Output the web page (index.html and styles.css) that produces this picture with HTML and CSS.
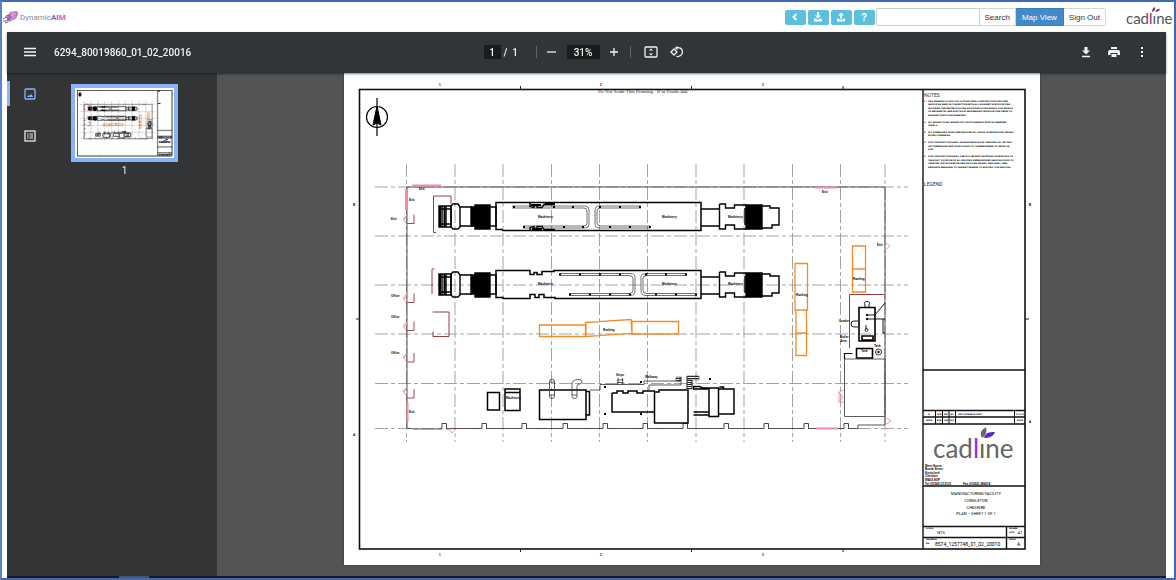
FILE: index.html
```html
<!DOCTYPE html>
<html lang="en">
<head>
<meta charset="utf-8">
<meta name="viewport" content="width=device-width, initial-scale=1">
<title>DynamicAIM</title>
<link rel="stylesheet" href="styles.css">
</head>
<body>
<div class="app">
  <header class="topbar">
    <a class="brand" href="#">
      <svg class="brand-mark" viewBox="0 0 16 14" aria-hidden="true">
        <path d="M4 7L7 2l7-1 1.500 3-3 5-7 3z" fill="#b97cc6"/>
        <path d="M0 9l3-2 3 1M0 11h4l1-2M2 13l3-1M3 6l3-1 2 3-3 2z" fill="none" stroke="#8a5a9c" stroke-width="1"/>
        <path d="M8 4l4-1M8 6l5-2M8 9l4-3" stroke="#e8b0dc" stroke-width="1"/>
      </svg>
      <span>Dynamic<b>AI<span class="brand-end">M</span></b></span>
    </a>
    <div class="actions">
      <button class="tool" type="button" aria-label="Back"><svg viewBox="0 0 10 10"><path d="M6.500 2L3.500 5l3 3" fill="none" stroke="#fff" stroke-width="1.800"/></svg></button>
      <button class="tool" type="button" aria-label="Download"><svg viewBox="0 0 10 10"><path d="M4 0h2v3.500h2L5 6.500 2 3.500h2zM1 6.500h2l2 1.500 2-1.500h2V9.500H1z" fill="#fff"/></svg></button>
      <button class="tool" type="button" aria-label="Upload"><svg viewBox="0 0 10 10"><path d="M4 6.500h2V3.500h2L5 .5 2 3.500h2zM1 6.500h2v1h4v-1h2v3H1z" fill="#fff"/></svg></button>
      <button class="tool" type="button" aria-label="Help">?</button>
    </div>
    <form class="search">
      <input class="search-box" type="text" aria-label="Search">
      <button class="btn" type="button">Search</button>
      <button class="btn primary" type="button">Map View</button>
      <button class="btn last" type="button">Sign Out</button>
    </form>
    <svg class="company" viewBox="0 0 48 20" role="img" aria-label="cadline">
      <text class="logo-small" x="1" y="17">cad<tspan fill="#a0207c">l</tspan>ıne</text>
      <path d="M27 5q0-4 3-5 1 4-3 5M30 5q2-4 5-3-1 3-5 3" fill="#7b3a72"/>
    </svg>
  </header>

  <section class="viewer">
    <div class="toolbar">
      <div class="tb-left">
        <button class="icon" type="button" aria-label="Menu"><svg viewBox="0 0 12 10"><path d="M0 1.500h12M0 5h12M0 8.500h12" stroke="#f1f1f1" stroke-width="1.400"/></svg></button>
        <h1 class="doc">6294_80019860_01_02_20016</h1>
      </div>
      <div class="tb-mid">
        <input class="field page" type="text" value="1" aria-label="Page">
        <span class="count">/&nbsp; 1</span>
        <i class="sep"></i>
        <button class="icon step" type="button" aria-label="Zoom out"><svg viewBox="0 0 12 12"><path d="M1 6h9" stroke="#f1f1f1" stroke-width="1.300"/></svg></button>
        <input class="field zoom" type="text" value="31%" aria-label="Zoom level">
        <button class="icon step" type="button" aria-label="Zoom in"><svg viewBox="0 0 12 12"><path d="M1 6h8M5 2v8" stroke="#f1f1f1" stroke-width="1.300"/></svg></button>
        <i class="sep end"></i>
        <button class="icon wide" type="button" aria-label="Fit to page"><svg viewBox="0 0 14 12"><rect x="1" y="1" width="12" height="10" rx="1" fill="none" stroke="#f1f1f1" stroke-width="1.300"/><path d="M7 2.500l2 2H5zM7 9.500l2-2H5z" fill="#f1f1f1"/></svg></button>
        <button class="icon wide" type="button" aria-label="Rotate"><svg viewBox="0 0 14 12"><path d="M1 6l3-3 3 3-3 3z" fill="none" stroke="#f1f1f1" stroke-width="1.300"/><path d="M6 1.800c4-1 6.500 1.200 6.500 4.200S9.500 11 6.500 10.500" fill="none" stroke="#f1f1f1" stroke-width="1.300"/><path d="M7.500 0v4L4.500 2z" fill="#f1f1f1"/></svg></button>
      </div>
      <div class="tb-right">
        <button class="icon right" type="button" aria-label="Download file"><svg viewBox="0 0 12 12"><path d="M4.500 1h3v3.500H10l-4 4-4-4h2.500zM2 9.800h8v1.400H2z" fill="#f1f1f1"/></svg></button>
        <button class="icon right" type="button" aria-label="Print"><svg viewBox="0 0 12 12"><path d="M3 1h6v2H3zM2 4h8q2 0 2 2v3H9.500V7h-7v2H0V6q0-2 2-2M3.500 8h5v3h-5z" fill="#f1f1f1"/></svg></button>
        <button class="icon right" type="button" aria-label="More"><svg viewBox="0 0 12 12"><path d="M5 1h2v2H5zM5 5h2v2H5zM5 9h2v2H5z" fill="#f1f1f1"/></svg></button>
      </div>
    </div>

    <div class="work">
      <aside class="side">
        <nav class="tabs">
          <button class="tab active" type="button" aria-label="Thumbnails"><svg viewBox="0 0 12 12"><rect x="1" y="1" width="10" height="10" rx="1" fill="none" stroke="#8ab4f8" stroke-width="1.300"/><path d="M3 9l1.500-2 1 .8L7.500 6 9 9z" fill="#8ab4f8"/></svg></button>
          <button class="tab" type="button" aria-label="Outline"><svg viewBox="0 0 12 12"><rect x="1" y="1" width="10" height="10" fill="none" stroke="#e8e8e8" stroke-width="1.300"/><path d="M3 4h1.500M5.500 4H9M3 6h1.500M5.500 6H9M3 8h1.500M5.500 8H9" stroke="#e8e8e8" stroke-width="1.100"/></svg></button>
        </nav>
        <figure class="thumb">
          <svg class="thumb-sheet" viewBox="344 73 696 492" aria-hidden="true">
            <use href="#plan"/>
            <g class="dense"><use href="#plan" x="3"/></g>
            <g class="dense"><use href="#plan" y="3"/></g>
            <g class="dense"><use href="#plan" x="3" y="3"/></g>
          </svg>
          <figcaption>1</figcaption>
        </figure>
      </aside>

      <main class="canvas">
        <svg class="sheet" viewBox="344 73 696 492" role="img" aria-label="Manufacturing facility plan">
          <defs>
            <pattern id="hatch" width="2" height="2" patternUnits="userSpaceOnUse"><path d="M0 .5h2" stroke="#222" stroke-width="1"/></pattern>
            <g id="ends" fill="none" stroke="#000" stroke-width="1.400">
              <path d="M439 206h12v21h-12zM442 206v21M446 206v21M439 209h12M439 224h12"/>
              <path d="M440 206v21M444.500 206v21" stroke-width="2"/>
              <path d="M451 206l2-2h5l2 3v20l-2 2h-5l-2-2zM460 207h12v19h-12z"/>
              <path d="M471 207h4v-2h15v24h-15v-3h-4z" fill="#000"/>
              <path d="M490 207h6v19h-6M701 209h18.500v17H701M719.500 204h6v4h9v-3h12M719.500 204v25h6v-4h9v4h12M745 208v17"/>
              <path d="M746 205h16v24h-16z" fill="#000"/>
              <path d="M762 206h8v2h9v17h-7v3h-10"/>
            </g>
            <path id="door" d="M0 -4l-4 4 3 4M-3 1l3-4" fill="none" stroke="#ef7f9c" stroke-width=".8"/>
            <path id="frame" d="M0 8h7.500v-9" fill="none" stroke="#a34852" stroke-width="1"/>
            <g id="bump"><path d="M0 427h4.500v3H0z" fill="#fff"/><path d="M-1 428.500h1v-5h4.500v5h1" fill="none" stroke="#333" stroke-width=".9"/></g>
          </defs>
          <g id="plan">
            <rect x="344" y="73" width="696" height="492" fill="#fff"/>
            <rect x="359.500" y="89.500" width="665.500" height="459.500" fill="none" stroke="#111" stroke-width="1.600"/>
            <path d="M520.500 86v4M691.500 86v4M843 86v4M520.500 549v3M691.500 549v3M843 549v3M356 319h4M1025 319h4" stroke="#222"/>
            <g class="mark">
              <text x="439" y="86">1</text><text x="600" y="86">2</text><text x="762" y="86">3</text>
              <text x="439" y="556">1</text><text x="600" y="556">2</text><text x="762" y="556">3</text>
              <text x="353" y="206">B</text><text x="353" y="436">A</text><text x="1029" y="206">B</text><text x="1029" y="423">A</text>
            </g>
            <text class="scale-note" x="598" y="93">Do Not Scale This Drawing - If in Doubt Ask</text>

            <g fill="none" stroke="#000">
              <circle cx="377" cy="117" r="10.500" stroke-width="1.200"/>
              <path d="M377 98v38" stroke-width="1.200"/>
              <path d="M377 106l4 19-4-2-4 2z" fill="#000"/>
            </g>

            <path d="M406.500 164v278M455 164v278M503 164v278M551.500 164v278M599.500 164v278M647.500 164v278M696 164v278M744 164v278M792.500 164v278M840.500 164v278M885 164v278M375 187h533M375 236h533M375 285h533M375 334h533M375 383.500h533M375 428.500h533" fill="none" stroke="#999" stroke-width=".9" stroke-dasharray="13 3 4 3"/>

            <path d="M406.500 187H885V425h-27v3.500H452l-3 .5h-35l-7-1V187" fill="none" stroke="#444" stroke-width=".9"/>
            <use href="#bump" x="442"/><use href="#bump" x="482"/><use href="#bump" x="522"/><use href="#bump" x="563"/><use href="#bump" x="603"/><use href="#bump" x="643"/><use href="#bump" x="683"/><use href="#bump" x="724"/><use href="#bump" x="764"/><use href="#bump" x="804"/><use href="#bump" x="844"/>

            <path d="M412 185.500h29M406 189v21M407.500 402v20M815 187.500h23M816 428.500h22" stroke="#f58aa8" stroke-width="2"/>
            <use href="#door" x="407" y="219"/><use href="#door" x="407" y="298"/><use href="#door" x="407" y="326"/><use href="#door" x="407" y="357"/><use href="#door" x="407" y="391"/>
            <use href="#frame" x="406.500" y="215.500"/><use href="#frame" x="406.500" y="294.500"/><use href="#frame" x="406.500" y="322.500"/><use href="#frame" x="406.500" y="354"/><use href="#frame" x="406.500" y="390"/>
            <path d="M885 242l5 4-5 4M885 417l6 4-6 4M844 390l-5 2 4 5-4 5h5M839 392v10M449 429l3 4 4-4" fill="none" stroke="#ef7f9c" stroke-width=".8"/>
            <path d="M436 232.500h-2.500V196H451v8M434.500 269h-2.500v25M432.500 312h16.500v24.500h-16v-5M849.500 348v-53.500H885" fill="none" stroke="#9a3b46" stroke-width="1"/>

            <use href="#ends"/>
            <use href="#ends" y="68"/>
            <g fill="none" stroke="#000" stroke-width="1.500">
              <path d="M496 202.500h205v28H503l-1-1h-6zM530 202.500v4l4 1v-2h3v2h5l2-3h11M530 230.500v-3l4-1v2h3v-2h5l2 3h11"/>
              <path d="M496 270.500h34v4h4v-2h3v2h5v-3h12v-1h147v28H555v-1h-11v-3h-5v3h-4v-3h-5v4h-27v-1h-7z"/>
            </g>
            <g fill="none" stroke="#333" stroke-width=".7">
              <path d="M512 206h73q4 0 4 4v14q0 4-4 4h-62M512 208h72q3 0 3 3v12q0 3-3 3h-61M641 206h-41q-5 0-5 4v14q0 4 5 4h50M641 208h-40q-4 0-4 3v12q0 3 4 3h49"/>
              <path d="M559 273.500h71q5 0 5 4v13q0 5-5 5h-61M559 275.500h70q4 0 4 3v12q0 3-4 3h-60M687 273.500h-41q-5 0-5 4v13q0 5 5 5h51M687 275.500h-40q-4 0-4 3v12q0 3 4 3h50"/>
            </g>
            <path d="M513 207h2M553 207h2M572 207h2M599 207h2M619 207h2M639 207h2M523 227h2M563 227h2M582 227h2M609 227h2M629 227h2M649 227h2M559 274.500h2M579 274.500h2M599 274.500h2M619 274.500h2M645 274.500h2M665 274.500h2M685 274.500h2M569 294.500h2M589 294.500h2M609 294.500h2M629 294.500h2M655 294.500h2M675 294.500h2M695 294.500h2M531 205h10M532 229h10M545 204h10M545 230h10M604 387h2M604 414h2M640 414h2M640 382h2M709 379h2" stroke="#000" stroke-width="2"/>

            <g fill="none" stroke="#f28c28" stroke-width="1.300">
              <path d="M539.500 325H586v11.500h-46.500zM585.500 322.500L631 319.500l1 14-46.500 3zM632 321.500h46.500V334H632z"/>
              <path d="M795 263.500h12.500V310H795zM796 310h10.500v45.500H796zM796 333h10.500M852.500 246h13v46h-13zM852.500 269h13"/>
            </g>

            <g fill="none" stroke="#000" stroke-width="1.500">
              <path d="M487.500 392.500h12V410h-12zM505 389h15v21.500h-15zM505 392.500h15M539.500 390H586v29.500h-46.500zM586 391.500h3.500V415H586"/>
              <path d="M612 393h5v-2h6v2h5v-2h9v2h6v-2h12M612 393v19h42M654.500 392v31H688v-33h-29v2z"/>
              <path d="M693.500 386v3H709M693.500 386.500h6l3 1.500h6.500M693.500 415h15.500M693.500 412h15.500M709 388h9.500v28.500H709zM718.500 389H734v25h-15.500M719.500 387h4v2"/>
            </g>
            <g fill="none" stroke="#333" stroke-width=".8">
              <path d="M549.500 396v-14q0-3 2.500-3t2.500 3v14q0 2.500-2.500 2.500t-2.500-2.500M549.500 382h5M549.500 395h5M572 396v-12q0-4 6-4.500 4 0 4 2l-1 2q-4 0-4 3v10q0 2-2.500 2t-2.500-2M572 395h5"/>
              <path d="M590 390h10v-5.500h44V381h36v-4M649 390v-5h32v-8M618 378v7M622.500 378v7M617 380h6.500M617 382.500h6.500M687 376v14M692 380v8M844.500 359H885v57.500h-40.500z"/>
            </g>
            <path d="M676 377h5v4h-5zM687 376h12v4h-12zM687 380h5v9h-5z" fill="url(#hatch)" stroke="#444" stroke-width=".6"/>
            <path d="M844.500 359v-5.500h8" fill="none" stroke="#111" stroke-width="1.200"/>
            <g fill="none" stroke="#000">
              <path d="M859 307.500h16V341h-16zM856.500 348.500h16v9.500h-16zM862 336h11v4h-11z" stroke-width="1.600"/>
              <path d="M865 307v-2q-2-3 2-3.500 4 0 2 3.500v2M868 315h7l10-12M867 319h18M883 319v14h2M866 325v5M854 321a3 3 0 1 0 0 6M858 321h-4M858 327h-4" stroke-width=".9"/>
              <circle cx="866.500" cy="330" r="1.500" stroke-width=".7"/><circle cx="867" cy="315" r=".8" fill="#000"/><circle cx="867" cy="319" r=".8" fill="#000"/>
              <circle cx="878.500" cy="352" r="3" stroke-width=".8"/><circle cx="878.500" cy="352" r=".8" fill="#000"/>
            </g>

            <g class="tag">
              <text x="538" y="218">Machinery</text><text x="662" y="218">Machinery</text><text x="728" y="218">Machinery</text>
              <text x="538" y="285">Machinery</text><text x="662" y="285">Machinery</text><text x="728" y="285">Machinery</text>
              <text x="506" y="399">Machinery</text><text x="603" y="331">Racking</text><text x="796" y="296">Racking</text><text x="853" y="280">Racking</text>
              <text x="419" y="190">Exit</text><text x="409" y="201">Exit</text><text x="391" y="220">Exit</text><text x="409" y="413">Exit</text><text x="822" y="193">Exit</text><text x="877" y="246">Exit</text>
              <text x="391" y="297">Office</text><text x="391" y="318">Office</text><text x="391" y="354">Office</text>
              <text x="616" y="376">Steps</text><text x="645" y="378">Walkway</text><text x="839" y="322">Loader</text><text x="840" y="338">Boiler</text><text x="840" y="342">Area</text><text x="861" y="352">Tank</text><text x="874" y="347">Tank</text>
            </g>

            <path d="M923 89.500V549M923 370h102M923 410.500h102M923 417h102M923 424h102M923 486h102M923 526.500h102M923 537.500h102M1006.500 526.500V549" stroke="#111" stroke-width="1.400"/>
            <path d="M935.500 410.500V424M942.500 410.500V424M949 410.500V424M955.500 410.500V424M1014.500 410.500V424" stroke="#111"/>
            <text class="head" x="924" y="97">NOTES</text>
            <text class="head" x="924" y="186">LEGEND</text>
            <g class="note">
              <text x="924" y="102">1.</text><text x="928" y="102">THIS DRAWING IS FOR CIVIL &amp; STRUCTURAL CONSTRUCTION ONLY AND</text>
              <text x="928" y="105">SHOULD BE READ IN CONJUNCTION WITH ALL RELEVANT SPECIFICATIONS</text>
              <text x="928" y="109">INCLUDING THE UNITED UTILITIES SOLUTIONS SCOPE WORKS. FOR DETAILS</text>
              <text x="928" y="112">OF MECHANICAL AND ELECTRICAL ENGINEERING INSTALLATIONS REFER TO</text>
              <text x="928" y="116">RELEVANT DISCIPLINE DRAWINGS.</text>
              <text x="924" y="123">2.</text><text x="928" y="123">ALL WORKS TO BE CARRIED OUT IN ACCORDANCE WITH US AMENDED</text>
              <text x="928" y="126">CESWI 6.</text>
              <text x="924" y="133">3.</text><text x="928" y="133">ALL DIMENSIONS IN MILLIMETRES AND ALL LEVELS IN METRES AOD UNLESS</text>
              <text x="928" y="136">NOTED OTHERWISE.</text>
              <text x="924" y="143">4.</text><text x="928" y="143">SITE CONSTRUCTION SHALL BE RESPONSIBLE FOR CHECKING ALL SETTING</text>
              <text x="928" y="147">OUT DIMENSIONS AND LEVELS PRIOR TO COMMENCEMENT OF WORK ON</text>
              <text x="928" y="150">SITE.</text>
              <text x="924" y="157">5.</text><text x="928" y="157">SITE CONSTRUCTION SHALL CHECK &amp; INFORM THE WORKS SUPERVISOR OF</text>
              <text x="928" y="161">THE EXACT LOCATION OF ALL EXISTING UNDERGROUND SERVICES PRIOR TO</text>
              <text x="928" y="164">CARRYING OUT EXCAVATION AND/OR PILING WORKS, AND SHALL TAKE</text>
              <text x="928" y="168">ADEQUATE MEASURES TO PREVENT DAMAGE TO EXISTING LIVE SERVICES.</text>
            </g>
            <g class="cell">
              <text x="929" y="415">A</text><text x="939" y="415">CAD</text><text x="946" y="415">DAT</text><text x="952" y="415">JBL</text><text x="970" y="415">FOR GUIDANCE ONLY</text><text x="1020" y="415">17.9.15</text>
              <text x="929" y="421">ISSUE</text><text x="939" y="421">DRN</text><text x="946" y="421">CHK</text><text x="952" y="421">APP</text><text x="1020" y="421">DATE</text>
            </g>
            <g class="tag">
              <text x="925" y="467">Mere House</text><text x="925" y="470">Brook Street</text><text x="925" y="474">Knutsford</text><text x="925" y="477">Cheshire</text><text x="925" y="481">WA16 8GP</text>
              <text x="925" y="485">Tel (01565) 213112</text><text x="963" y="485">Fax (01565) 286674</text>
            </g>
            <g class="note">
              <text x="926" y="529">SCALE</text><text x="926" y="540">DRAWING</text><text x="926" y="544">No.</text><text x="1009" y="529">DRAWN</text><text x="1009" y="533">SIZE</text><text x="1009" y="540">ISSUE</text>
            </g>
            <text class="logo-big" x="933" y="458">cad<tspan fill="#9a2be2">l</tspan>ıne</text>
            <path d="M982 438q-4-6 4-11 2 7-4 11" fill="#666"/><path d="M984 438q1-7 11-6-2 6-11 6" fill="#5a28d8"/>
            <g class="title">
              <text x="976" y="495">MANUFACTURING FACILITY</text><text x="976" y="502">CONGLETON</text><text x="976" y="509">CHESHIRE</text><text x="976" y="515">PLAN – SHEET 1 OF 1</text>
              <text x="941" y="534">NTS</text><text x="1020" y="534">A1</text>
            </g>
            <text class="num" x="935" y="546">8574_1257748_01_02_20010</text><text class="num" x="1017" y="546">A</text>
          </g>
        </svg>
      </main>
    </div>
    <div class="scroll"><i class="scroll-thumb"></i></div>
  </section>
</div>
</body>
</html>
```
FILE: styles.css
```css
* { box-sizing: border-box; }

body {
  margin: 0;
  background: #fff;
  font-family: "Liberation Sans", Arial, sans-serif;
}

button, input { font: inherit; margin: 0; }
button { cursor: pointer; }

.app {
  min-height: 100vh;
  display: flex;
  flex-direction: column;
  border: 2px solid #4169b8;
  border-left-color: #5b82cf;
}

/* Site header */
.topbar {
  display: flex;
  align-items: center;
  height: 30px;
  padding: 0 1px;
}

.brand {
  display: flex;
  align-items: center;
  gap: 1px;
  margin-right: auto;
  color: #888;
  font: 8px Roboto, sans-serif;
  text-decoration: none;
}
.brand b { color: #8c5cb8; }
.brand .brand-end { color: #d264b4; }
.brand-mark { width: 16px; height: 14px; }

.actions { display: flex; gap: 2px; }
.tool {
  display: flex;
  align-items: center;
  justify-content: center;
  width: 21px;
  height: 15px;
  padding: 0;
  border: 0;
  border-radius: 2px;
  background: #5bc0de;
  color: #fff;
  font-size: 10px;
  font-weight: bold;
}
.tool svg { width: 10px; height: 10px; }

.search {
  display: flex;
  height: 18px;
  margin: 0 19px 0 1px;
}
.search-box {
  width: 104px;
  border: 1px solid #ccc;
  border-radius: 2px 0 0 2px;
  padding: 0 4px;
  font-size: 8px;
}
.btn {
  padding: 0 5px;
  border: 1px solid #d5d5d5;
  border-left: 0;
  background: #fff;
  color: #333;
  font-size: 8px;
  white-space: nowrap;
}
.btn.primary { padding: 0 6px; background: #428bca; border-color: #357ebd; color: #fff; }
.btn.last { border-radius: 0 2px 2px 0; }

.company { width: 48px; height: 20px; }
.logo-small { font: 15px Lato, sans-serif; fill: #555; }

/* PDF viewer */
.viewer {
  flex: 1;
  display: flex;
  flex-direction: column;
  margin: 0 8px 0 5px;
  background: #323639;
  font-family: Roboto, sans-serif;
}

.toolbar {
  position: relative;
  display: grid;
  grid-template-columns: 1fr auto 1fr;
  align-items: center;
  height: 41px;
  padding-bottom: 1px;
  background: #323537;
  box-shadow: 0 1px 2px rgba(0, 0, 0, .5);
  color: #f1f1f1;
}
.tb-left, .tb-mid, .tb-right { display: flex; align-items: center; }
.tb-left { padding-left: 17px; gap: 18px; }
.tb-right { justify-content: flex-end; padding-right: 10px; }

.doc { margin: 0; font-size: 10px; font-weight: 500; }

.icon {
  display: flex;
  align-items: center;
  justify-content: center;
  height: 24px;
  padding: 0;
  border: 0;
  background: none;
}
.icon svg { width: 12px; height: 12px; }
.icon.step { width: 24px; }
.icon.wide { width: 26px; }
.icon.wide svg { width: 14px; }
.icon.right { width: 28px; }

.field {
  height: 14px;
  padding: 0;
  border: 0;
  background: #191b1c;
  color: #f1f1f1;
  font-size: 10px;
  font-weight: 500;
  text-align: center;
}
.page { width: 17px; }
.zoom { width: 33px; margin: 0 3px; }
.count { width: 32px; padding-left: 3px; font-size: 10px; font-weight: 500; }
.sep { width: 1px; height: 12px; margin: 0 3px; background: #5f6366; }
.sep.end { margin-right: 7px; }

.work { flex: 1; display: flex; }

.side {
  flex: 0 0 210px;
  display: flex;
  background: #323436;
}
.tabs { display: flex; flex-direction: column; gap: 17px; padding-top: 8px; }
.tab {
  display: flex;
  align-items: center;
  width: 32px;
  height: 25px;
  padding: 0 0 0 14px;
  border: 0;
  border-left: 3px solid transparent;
  background: none;
}
.tab.active { border-left-color: #8ab4f8; border-radius: 0 2px 2px 0; }
.tab svg { width: 12px; height: 12px; }

.thumb {
  width: 107px;
  margin: 11px 0 0 32px;
  color: #e8e8e8;
  font-size: 10px;
  text-align: center;
}
.thumb-sheet {
  display: block;
  width: 100%;
  border: 4px solid #8ab4f8;
  background: #fff;
}
.thumb figcaption { margin-top: 3px; }
.dense { mix-blend-mode: multiply; }

.canvas {
  flex: 1;
  display: flex;
  justify-content: center;
  align-items: flex-start;
  background: #525456;
}
.sheet { flex: 0 1 696px; min-width: 0; box-shadow: 0 0 2px #333; }

.scroll { height: 2px; background: #151b25; padding-left: 112px; }
.scroll-thumb { display: block; width: 30px; height: 2px; background: #45566c; }

/* Drawing lettering */
.mark, .tag { font: bold 3px "Liberation Sans", sans-serif; fill: #000; }
.note, .cell { font: bold 2px "DejaVu Sans", sans-serif; fill: #000; }
.cell { text-anchor: middle; }
.scale-note { font: 4px "DejaVu Serif", serif; fill: #222; }
.head { font: 5px Roboto, sans-serif; fill: #333; }
.title { font: 4px Roboto, sans-serif; fill: #000; text-anchor: middle; }
.num { font: 5px Roboto, sans-serif; fill: #000; }
.logo-big { font: 26px Lato, sans-serif; fill: #666; }
```
